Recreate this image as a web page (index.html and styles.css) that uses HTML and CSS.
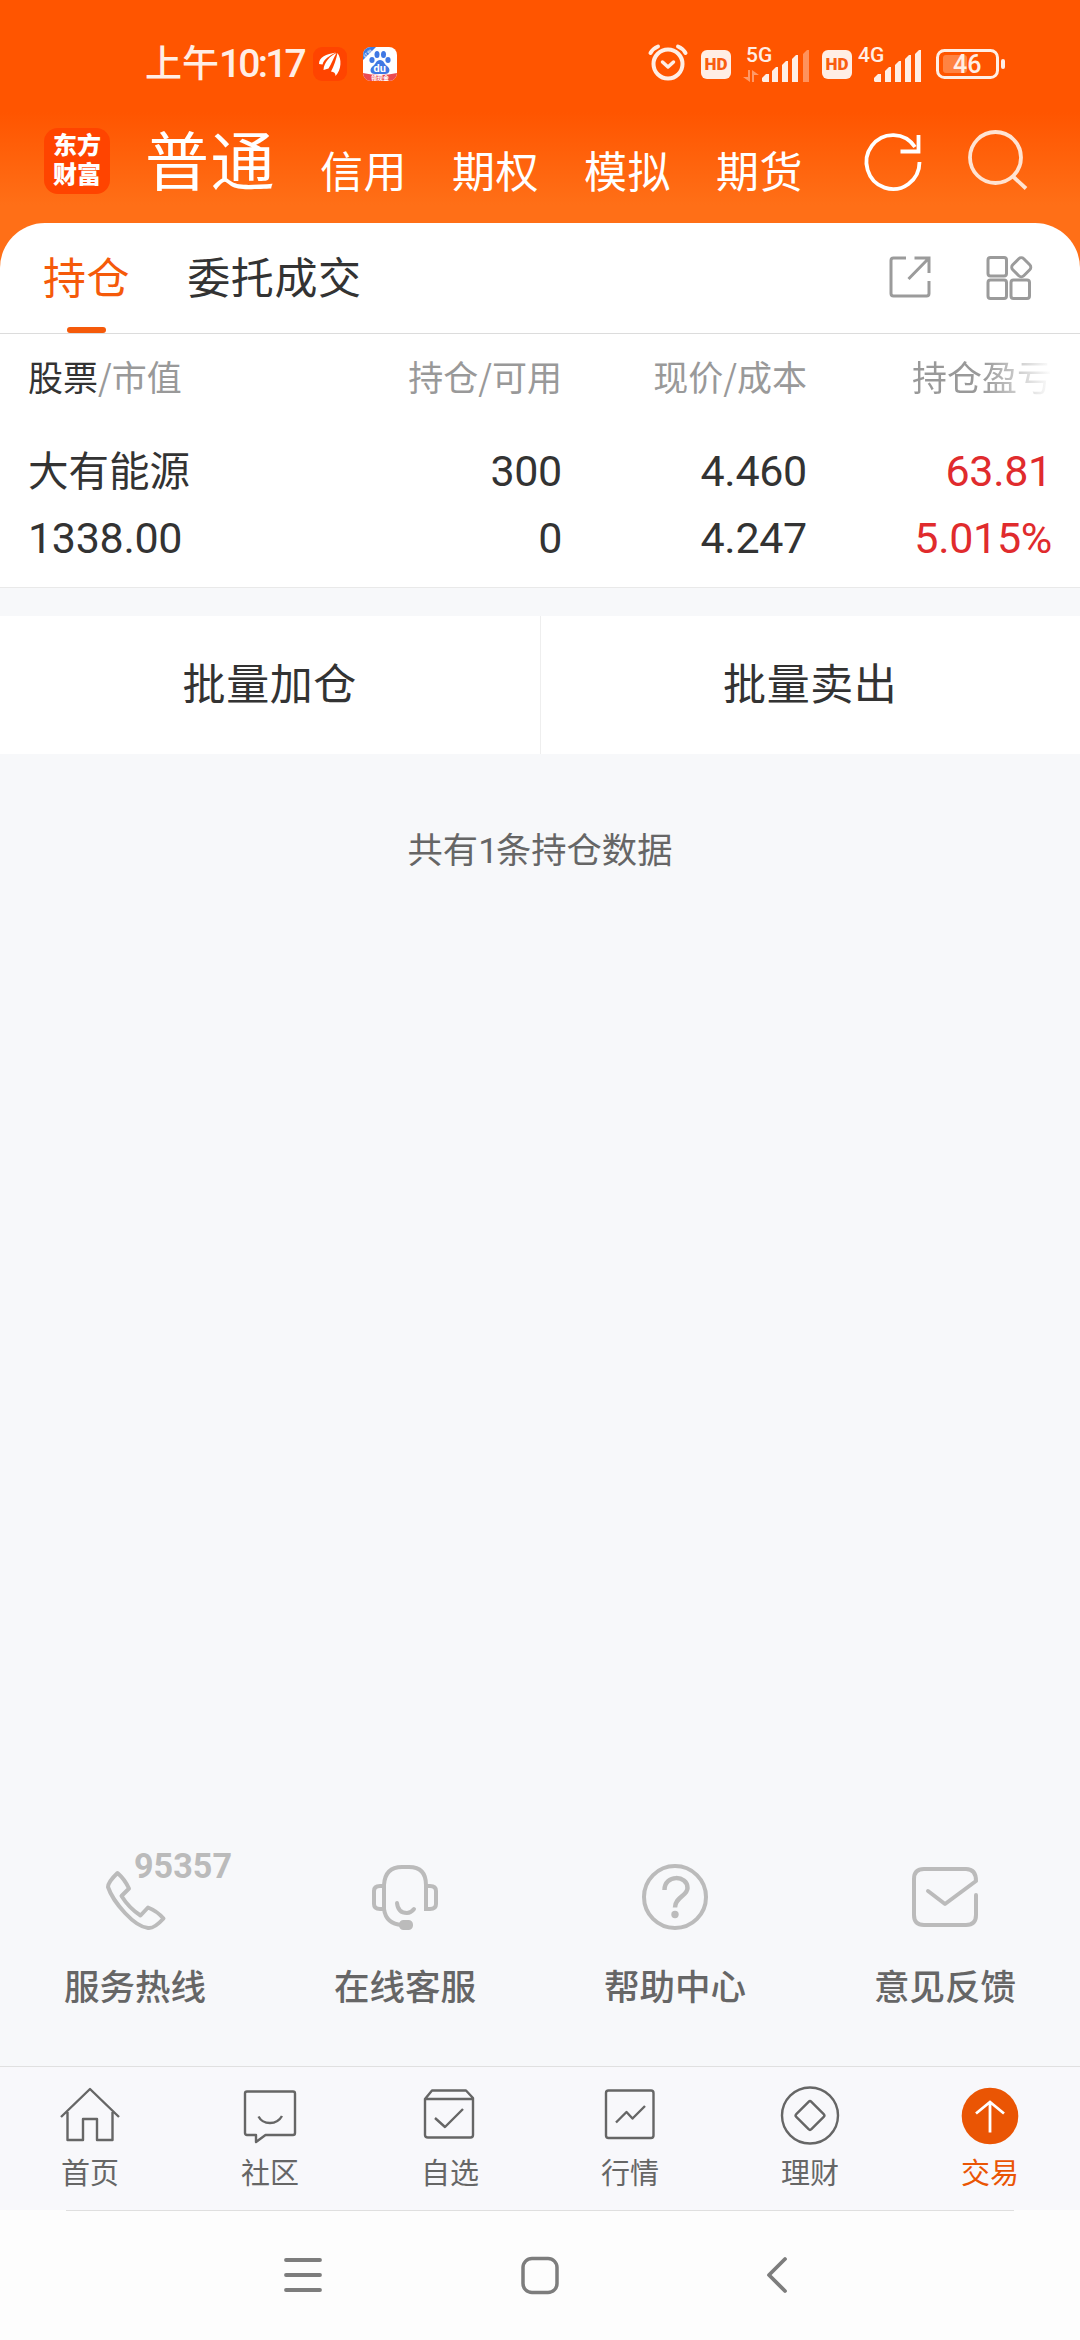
FILE: index.html
```html
<!DOCTYPE html>
<html lang="zh-CN">

<head>
    <meta charset="utf-8">
    <meta name="viewport" content="width=device-width, initial-scale=1.0">
    <title>持仓</title>
    <link rel="stylesheet" href="styles.css">
</head>

<body>
    <header class="top">
        <div class="status">
            <span class="time">上午<span class="clock">10:17</span></span>
            <svg class="app-icon" width="34" height="34" viewBox="0 0 34 34">
                <rect width="34" height="34" rx="9" fill="#ff4400"/>
                <path d="M6 17C6 10 13 7 23 5.500C16 9 11 12 9.500 17.500zM10.500 23C11 15 17 9 23.500 6C20 12 18.500 17 15.500 21.500zM18 24.500C21 19 23 13 24.500 6C29 12 28.500 23 22.500 29C22.500 26 21 25 18 24.500z" fill="#fff"/>
            </svg>
            <svg class="app-icon baidu" width="34" height="34" viewBox="0 0 34 34">
                <clipPath id="round"><rect width="34" height="34" rx="8"/></clipPath>
                <g clip-path="url(#round)">
                    <rect width="34" height="34" fill="#fff"/>
                    <path d="M0 0h13L0 13z" fill="#3f7be0"/>
                    <text x="0" y="8.500" font-size="5" fill="#fff" transform="rotate(-42 5 7)">红包</text>
                    <g fill="#3f78e4">
                        <ellipse cx="14" cy="7.500" rx="2.500" ry="3.600"/>
                        <ellipse cx="20.500" cy="7.500" rx="2.500" ry="3.600"/>
                        <ellipse cx="9" cy="13" rx="2.600" ry="3"/>
                        <ellipse cx="25" cy="13" rx="2.600" ry="3"/>
                        <path d="M17 13c4 0 4 4 7 6c4 3 3 8-2 8H12c-5 0-6-5-2-8c3-2 3-6 7-6z"/>
                    </g>
                    <text x="10.500" y="25" font-size="11" font-weight="700" fill="#fff" class="latin">du</text>
                    <path d="M0 26q17 4 34 0v8H0z" fill="#ea4a50"/>
                    <text x="8" y="33" font-size="6" font-weight="700" fill="#fff">领现金</text>
                </g>
            </svg>
            <div class="status-right">
                <svg width="40" height="38" viewBox="0 0 40 38" fill="none" stroke="#ffeee5" stroke-linecap="round">
                    <circle cx="20" cy="21" r="14.500" stroke-width="4"/>
                    <path d="M14.500 19l5.500 5l5.500-5" stroke-width="3.500" stroke-linejoin="round"/>
                    <path d="M2.500 10Q5 5.500 10 3.500M37.500 10Q35 5.500 30 3.500" stroke-width="4"/>
                </svg>
                <span class="hd">HD</span>
                <svg class="signal" width="67" height="38" viewBox="0 0 67 38" fill="#ffeee5">
                    <text x="3" y="17" font-size="21" class="latin net">5G</text>
                    <path d="M0 32h5V25h2v12zM16 30h-5v7H9V25z" opacity=".45"/>
                    <path d="M19 36v-3l4-4h3v8h-6zM29 37V26l4-4h2v15zM39 37V20l4-4h2v21zM49 37V14l4-4h2v27z"/>
                    <path d="M60 37V9l4-4h2v32z" opacity=".4"/>
                </svg>
                <span class="hd second">HD</span>
                <svg class="signal four" width="64" height="38" viewBox="0 0 64 38" fill="#ffeee5">
                    <text x="0" y="17" font-size="21" class="latin net">4G</text>
                    <path d="M16 36v-3l4-4h3v8h-6zM27 37V26l4-4h2v15zM37 37V20l4-4h2v21zM47 37V14l4-4h2v27zM57 37V9l4-4h2v32z"/>
                </svg>
                <svg class="battery" width="70" height="30" viewBox="0 0 70 30">
                    <rect x="1.500" y="1.500" width="60" height="27" rx="7" fill="none" stroke="#ffeee5" stroke-width="3"/>
                    <rect x="7" y="6" width="24" height="18" rx="3" fill="#ff8342"/>
                    <rect x="65" y="10" width="4" height="10" rx="2" fill="#ffeee5"/>
                    <text x="17" y="24" font-size="25" fill="#ffeee5" class="latin net">46</text>
                </svg>
            </div>
        </div>
        <nav class="accounts">
            <div class="logo">东方<br>财富</div>
            <a class="account active">普通</a>
            <a class="account">信用</a>
            <a class="account">期权</a>
            <a class="account">模拟</a>
            <a class="account">期货</a>
            <svg class="refresh" width="60" height="62" viewBox="0 0 60 62" fill="none" stroke="#fff" stroke-width="3.800">
                <path d="M56.500 33A26.500 27 0 1 1 52 18"/>
                <path d="M37.500 22.500H55.500V6"/>
            </svg>
            <svg class="search" width="60" height="62" viewBox="0 0 60 62" fill="none" stroke="#ffe3d2" stroke-width="3.800">
                <circle cx="27.500" cy="28.500" r="25.500"/>
                <path d="M44.500 47L58 59.500"/>
            </svg>
        </nav>
    </header>

    <main class="card">
        <div class="tabs">
            <a class="tab active">持仓</a>
            <a class="tab">委托成交</a>
            <div class="tools">
                <svg width="44" height="44" viewBox="0 0 44 44" fill="none" stroke="#9b9b9b" stroke-width="3">
                    <path d="M18 3H5.500Q3 3 3 5.500V38.500Q3 41 5.500 41H38.500Q41 41 41 38.500V26"/>
                    <path d="M26.500 3H41V18M41 3L20.500 24"/>
                </svg>
                <svg width="46" height="46" viewBox="0 0 46 46" fill="none" stroke="#9b9b9b" stroke-width="3">
                    <rect x="2" y="2.500" width="18.500" height="18.500" rx="2.500"/>
                    <rect x="2" y="25" width="18.500" height="18.500" rx="2.500"/>
                    <rect x="25" y="25" width="18.500" height="18.500" rx="2.500"/>
                    <rect x="27.500" y="4.500" width="15.500" height="15.500" rx="3.500" transform="rotate(45 35.250 12.250)"/>
                </svg>
            </div>
        </div>
        <div class="row head">
            <div><b>股票</b>/市值</div>
            <div>持仓/可用</div>
            <div>现价/成本</div>
            <div class="fade">持仓盈亏</div>
        </div>
        <div class="row stock">
            <div><span class="name">大有能源</span><br>1338.00</div>
            <div>300<br>0</div>
            <div>4.460<br>4.247</div>
            <div class="up">63.81<br>5.015%</div>
        </div>
    </main>

    <div class="batch">
        <a>批量加仓</a>
        <a>批量卖出</a>
    </div>
    <p class="total">共有<span class="clock">1</span>条持仓数据</p>

    <section class="support">
        <a>
            <svg width="66" height="68" viewBox="0 0 66 68" fill="none" stroke="#bbb" stroke-width="4" stroke-linejoin="round">
                <path d="M15.500 9Q22.500 15 27 24.500L19.500 32Q27 44 38.500 51.500L46 43.500Q55 47 61.500 54.500Q52 65 46 64Q36 63 23 49T6 23Q6 18 15.500 9z"/>
                <text x="32" y="14" font-size="35" fill="#bbb" stroke="none" textLength="98" lengthAdjust="spacingAndGlyphs" class="hotline">95357</text>
            </svg>
            服务热线
        </a>
        <a>
            <svg width="66" height="68" viewBox="0 0 66 68" fill="none" stroke="#bbb" stroke-width="4" stroke-linecap="round">
                <path d="M12 46V21Q13 3 30 3H37Q54 3 54 21V45H58Q64 45 64 40V27Q64 22 58 22H54M12 22H8Q2 22 2 27V40Q2 45 8 45H12Q14 60 30 61"/>
                <path d="M25 39Q26 49 35 49Q39 49 42 45"/>
                <rect x="29" y="58" width="10" height="6" rx="2.500" fill="#bbb"/>
            </svg>
            在线客服
        </a>
        <a>
            <svg width="66" height="68" viewBox="0 0 66 68" fill="none" stroke="#bbb" stroke-width="4">
                <circle cx="33" cy="33" r="31"/>
                <path d="M22.500 26C22.500 10 45.500 11 45.500 24C45.500 32 33 33 33 43.500" stroke-width="4.500"/>
                <circle cx="33" cy="50.500" r="3.700" fill="#bbb" stroke="none"/>
            </svg>
            帮助中心
        </a>
        <a>
            <svg width="66" height="68" viewBox="0 0 66 68" fill="none" stroke="#bbb" stroke-width="4" stroke-linecap="round" stroke-linejoin="round">
                <path d="M16 27L33 40L64 17Q64 5 54 5H12Q2 5 2 15V51Q2 61 12 61H54Q64 61 64 51V31"/>
            </svg>
            意见反馈
        </a>
    </section>

    <nav class="tabbar">
        <a>
            <svg width="60" height="60" viewBox="0 0 60 60" fill="none" stroke="#666" stroke-width="2.400" stroke-linejoin="round">
                <path d="M1 31L30 3L59 31M7.500 26V54H23V33H37V54H52.500V26"/>
            </svg>
            首页
        </a>
        <a>
            <svg width="60" height="60" viewBox="0 0 60 60" fill="none" stroke="#666" stroke-width="2.400" stroke-linejoin="round">
                <path d="M7 5.500H53Q55 5.500 55 7.500V47Q55 49 53 49H25.500L16 56V49H7Q5 49 5 47V7.500Q5 5.500 7 5.500z"/>
                <path d="M18.500 30.500Q22 37 30 37T42 30"/>
            </svg>
            社区
        </a>
        <a>
            <svg width="60" height="60" viewBox="0 0 60 60" fill="none" stroke="#666" stroke-width="2.400" stroke-linejoin="round">
                <path d="M5 13L12 4.500H46L53 12V49Q53 51.500 50.500 51.500H8Q5 51.500 5 49zM5 13H53M15 32L25 41L43 23"/>
            </svg>
            自选
        </a>
        <a>
            <svg width="60" height="60" viewBox="0 0 60 60" fill="none" stroke="#666" stroke-width="2.400" stroke-linejoin="round">
                <rect x="6" y="4.500" width="47.500" height="47.500" rx="2.500"/>
                <path d="M16 36.500L26.500 26L32.500 32.500L45 20"/>
            </svg>
            行情
        </a>
        <a>
            <svg width="60" height="60" viewBox="0 0 60 60" fill="none" stroke="#666" stroke-width="2.400" stroke-linejoin="round">
                <circle cx="30" cy="29.500" r="28"/>
                <rect x="19.300" y="18.800" width="21.400" height="21.400" rx="2" transform="rotate(45 30 29.500)"/>
            </svg>
            理财
        </a>
        <a class="active">
            <svg width="60" height="60" viewBox="0 0 60 60" fill="none" stroke="#fff" stroke-width="2.800">
                <circle cx="30" cy="30" r="28.300" fill="#ea5504" stroke="none"/>
                <path d="M30 46.500V16M16 27.500L30 16L44 27.500"/>
            </svg>
            交易
        </a>
    </nav>

    <footer class="system">
        <svg width="38" height="38" viewBox="0 0 38 38" fill="none" stroke="#7d7d7d" stroke-width="3.800" stroke-linecap="round">
            <path d="M2 4H36M2 19H36M2 34H36"/>
        </svg>
        <svg width="38" height="40" viewBox="0 0 38 40" fill="none" stroke="#7d7d7d" stroke-width="3.500">
            <rect x="2" y="2.500" width="34" height="34" rx="9"/>
        </svg>
        <svg width="38" height="38" viewBox="0 0 38 38" fill="none" stroke="#7d7d7d" stroke-width="3.800" stroke-linecap="round" stroke-linejoin="round">
            <path d="M27 3L11 19L27 35"/>
        </svg>
    </footer>
</body>

</html>
```

FILE: styles.css
```css
* {
    box-sizing: border-box;
}

body {
    margin: 0;
    width: 1080px;
    height: 2340px;
    display: flex;
    flex-direction: column;
    font-family: "Noto Sans CJK SC", sans-serif;
    color: #333;
    background: #f7f8fa;
}

svg {
    display: block;
    flex: none;
    overflow: visible;
}

.top {
    height: 270px;
    flex: none;
    background: linear-gradient(#ff5500 0, #ff5500 112px, #ff6f17 205px, #ff6f17 100%);
    color: #fff;
}

.latin,
.clock {
    font-family: Roboto, sans-serif;
}

.status {
    display: flex;
    align-items: center;
    height: 128px;
    padding-left: 145px;
    color: #ffeee5;
}

.time {
    width: 168px;
    flex: none;
    font-size: 37px;
    font-weight: 500;
    line-height: 44px;
    white-space: nowrap;
    margin-top: -3px;
}

.clock {
    font-weight: 400;
}

.time .clock {
    font-size: 39px;
    font-weight: 500;
    letter-spacing: -2.800px;
}

.baidu {
    margin-left: 16px;
}

.status-right {
    display: flex;
    align-items: center;
    margin-left: 251px;
}

.status-right > svg:first-child {
    margin-top: -4px;
}

.hd {
    width: 30px;
    height: 29px;
    margin-left: 13px;
    border-radius: 6px;
    background: #ffeee5;
    color: #f95d10;
    font: 900 17px/29px Roboto, sans-serif;
    text-align: center;
}

.signal {
    margin-left: 12px;
}

.net {
    font-weight: 500;
}

.hd.second {
    margin-left: 12px;
}

.four {
    margin-left: 6px;
}

.battery {
    margin-left: 14px;
}

.accounts {
    display: flex;
    align-items: flex-start;
    padding-left: 44px;
}

.logo {
    width: 66px;
    height: 66px;
    margin-right: 35px;
    padding-top: 4px;
    border-radius: 14px;
    background: #ff4400;
    font: 900 24px/29px Roboto, "Noto Sans CJK SC", sans-serif;
    text-align: center;
}

.account {
    width: 132px;
    height: 70px;
    font-size: 43px;
    line-height: 83px;
    letter-spacing: .5px;
    white-space: nowrap;
}

.account.active {
    width: 175px;
    font-size: 64px;
    line-height: 58px;
    letter-spacing: 1.500px;
}

.refresh {
    margin: 1px 0 0 15px;
}

.search {
    margin: 1px 0 0 45px;
}

.card {
    height: 365px;
    flex: none;
    margin-top: -47px;
    background: #fff;
    border-bottom: 1px solid #e9e9e9;
    border-radius: 45px 45px 0 0;
}

.tabs {
    display: flex;
    height: 111px;
    padding: 0 48px 0 43px;
    border-bottom: 1px solid #dcdcdc;
}

.tab {
    font-size: 43px;
    line-height: 104px;
    letter-spacing: .6px;
    margin-right: 57px;
}

.tab.active {
    display: flex;
    flex-direction: column;
    align-items: center;
    color: #f55a0a;
}

.tab.active::after {
    content: "";
    width: 39px;
    height: 6px;
    border-radius: 3px;
    background: #f55a0a;
}

.tools {
    display: flex;
    gap: 54px;
    margin: 32px 0 0 auto;
}

.row {
    display: grid;
    grid-template-columns: 290px 244px 245px 245px;
    padding: 0 27px 0 28px;
    text-align: right;
}

.row > :first-child {
    text-align: left;
}

.head {
    height: 99px;
    font-size: 35px;
    line-height: 83px;
    color: #999;
}

.head b {
    font-weight: 400;
    color: #333;
}

.fade {
    background: linear-gradient(90deg, #999 72%, #fff);
    background-clip: text;
    -webkit-background-clip: text;
    color: transparent;
}

.stock {
    font-family: Roboto, sans-serif;
    font-size: 43px;
    line-height: 67px;
    letter-spacing: -.3px;
    padding-top: 5px;
}

.name {
    font: 40.500px/60px "Noto Sans CJK SC", sans-serif;
    letter-spacing: 0;
}

.up {
    color: #e02b2d;
}

.batch {
    display: flex;
    height: 138px;
    flex: none;
    margin-top: 28px;
    background: #fff;
}

.batch a {
    flex: 1;
    font-size: 43px;
    line-height: 131px;
    letter-spacing: .6px;
    text-align: center;
}

.batch a + a {
    border-left: 1px solid #eee;
}

.total {
    margin: 69px 0 0;
    font-size: 35.300px;
    line-height: 50px;
    text-align: center;
    color: #666;
}

.total .clock {
    letter-spacing: -2px;
}

.support {
    display: flex;
    margin-top: auto;
    height: 202px;
    flex: none;
}

.support a {
    flex: 1;
    display: flex;
    flex-direction: column;
    align-items: center;
    gap: 28px;
    font-size: 35.500px;
    font-weight: 500;
    line-height: 50px;
    color: #666;
}

.hotline {
    font: 700 35px Roboto, sans-serif;
}

.tabbar {
    display: flex;
    height: 144px;
    flex: none;
    border-top: 1px solid #e0e0e0;
    background: #f8f8fb;
}

.tabbar a {
    flex: 1;
    display: flex;
    flex-direction: column;
    align-items: center;
    padding-top: 19px;
    font-size: 29px;
    line-height: 50px;
    color: #666;
}

.tabbar .active {
    color: #ea5504;
}

.system {
    display: flex;
    justify-content: center;
    gap: 199px;
    height: 130px;
    flex: none;
    padding-top: 46px;
    background: linear-gradient(#dfdfdf, #dfdfdf) 66px 0 / 948px 1px no-repeat #fdfdfd;
}
```
